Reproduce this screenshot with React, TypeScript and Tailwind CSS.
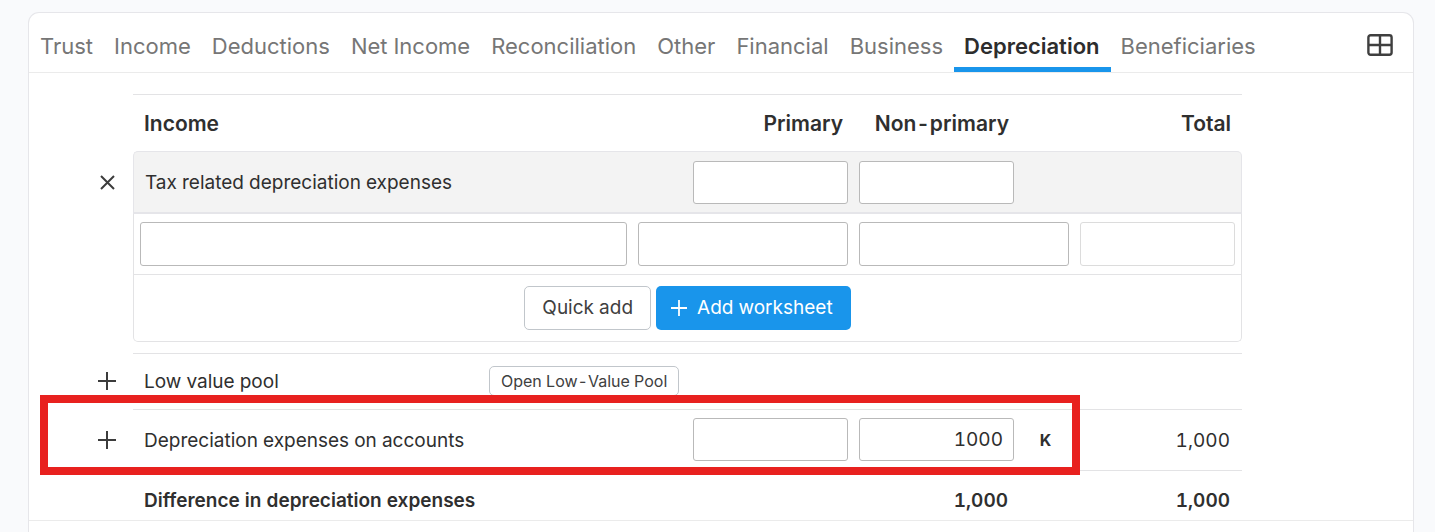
import { clsx } from "clsx";
import { useState } from "react";

const TABS = [
  "Trust",
  "Income",
  "Deductions",
  "Net Income",
  "Reconciliation",
  "Other",
  "Financial",
  "Business",
  "Depreciation",
  "Beneficiaries",
];

const GridIcon = () => (
  <svg
    width="26"
    height="22"
    viewBox="0 0 26 22"
    fill="none"
    stroke="currentColor"
    strokeWidth="2.4"
    aria-hidden
  >
    <rect x="1.4" y="1.2" width="23.2" height="19.6" rx="2.2" />
    <path d="M13 1.2v19.6M1.4 11h23.2" />
  </svg>
);

const PlusIcon = ({ size }: { size: number }) => (
  <svg
    width={size}
    height={size}
    viewBox="0 0 18 18"
    fill="none"
    stroke="currentColor"
    strokeWidth="2"
    aria-hidden
  >
    <path d="M9 0v18M0 9h18" />
  </svg>
);

const CloseIcon = () => (
  <svg
    width="16"
    height="16"
    viewBox="0 0 16 16"
    fill="none"
    stroke="currentColor"
    strokeWidth="2"
    aria-hidden
  >
    <path d="M2 1l13 13M15 1L2 14" />
  </svg>
);

const Field = ({
  label,
  value = "",
  className,
  disabled,
}: {
  label: string;
  value?: string;
  className?: string;
  disabled?: boolean;
}) => {
  const [current, setCurrent] = useState(value);

  return (
    <input
      type="text"
      aria-label={label}
      value={current}
      disabled={disabled}
      onChange={(event) => setCurrent(event.target.value)}
      className={clsx(
        "block rounded-[3px] border bg-white px-2.5 text-right outline-none",
        disabled ? "border-[#dcdcdc]" : "border-[#b9b9b9]",
        className,
      )}
    />
  );
};

const ExpandCell = ({
  label,
  children,
}: {
  label: string;
  children: React.ReactNode;
}) => (
  <td className="pr-4 align-middle">
    <button
      type="button"
      aria-label={label}
      className="ml-auto flex w-5 justify-center text-[#3c3c3c]"
    >
      {children}
    </button>
  </td>
);

const Tabs = () => (
  <header className="flex items-center justify-between border-b border-[#ebebeb] pr-5 pl-px">
    <nav className="flex">
      {TABS.map((tab) => (
        <a
          key={tab}
          href={`#${tab}`}
          className={clsx(
            "border-b-5 pt-[17px] pr-[11px] pb-[5px] pl-2.5 text-[22px] leading-8 whitespace-nowrap",
            tab === "Depreciation"
              ? "border-[#1995eb] font-semibold text-[#2d2d2d]"
              : "border-transparent text-[#767676]",
          )}
        >
          {tab}
        </a>
      ))}
    </nav>
    <button type="button" aria-label="Layout" className="pt-1 text-[#3f3f3f]">
      <GridIcon />
    </button>
  </header>
);

const DepreciationTable = () => (
  <table className="w-full table-fixed border-separate border-spacing-0 text-left text-[19px] leading-7">
    <colgroup>
      <col className="w-[60px]" />
      <col />
      <col className="w-[149px]" />
      <col className="w-[221px]" />
      <col className="w-[166px]" />
      <col className="w-[55px]" />
      <col className="w-[168px]" />
    </colgroup>
    <thead>
      <tr className="h-[57px] text-[21px] [&>th]:border-t [&>th]:border-[#e3e3e5] [&>th]:pt-0.5 [&>th]:font-semibold">
        <td />
        <th colSpan={2} className="pl-[11px]">
          Income
        </th>
        <th className="pr-2.5 text-right">Primary</th>
        <th className="pr-2.5 text-right">Non-primary</th>
        <th />
        <th className="pr-[11px] text-right">Total</th>
      </tr>
    </thead>
    <tbody>
      <tr className="h-[63px] [&>td+td]:border-t [&>td+td]:border-b-2 [&>td+td]:border-[#e5e5e9] [&>td+td]:bg-[#f3f3f3]">
        <ExpandCell label="Collapse tax related depreciation expenses">
          <CloseIcon />
        </ExpandCell>
        <td colSpan={2} className="rounded-tl-[5px] border-l pt-0.5 pl-[11px]">
          Tax related depreciation expenses
        </td>
        <td className="pr-[5px]">
          <Field
            label="Tax related primary"
            className="ml-auto h-[43px] w-[155px]"
          />
        </td>
        <td className="pl-1.5">
          <Field
            label="Tax related non-primary"
            className="h-[43px] w-[155px]"
          />
        </td>
        <td />
        <td className="rounded-tr-[5px] border-r" />
      </tr>
      <tr className="h-[61px] [&>td+td]:border-b [&>td+td]:border-[#e3e3e5]">
        <td />
        <td colSpan={2} className="border-l pr-[5px] pl-1.5">
          <Field label="Description" className="h-11 w-full" />
        </td>
        <td className="pr-[5px] pl-1.5">
          <Field label="Primary amount" className="h-11 w-full" />
        </td>
        <td colSpan={2} className="pr-[5px] pl-1.5">
          <Field label="Non-primary amount" className="h-11 w-full" />
        </td>
        <td className="border-r px-1.5">
          <Field label="Total amount" className="h-11 w-full" disabled />
        </td>
      </tr>
      <tr className="h-[67px]">
        <td />
        <td
          colSpan={6}
          className="rounded-b-[5px] border-x border-b border-[#e3e3e5]"
        >
          <div className="flex justify-center gap-[5px]">
            <button
              type="button"
              className="h-11 rounded-[5px] border border-[#c1c6cb] px-[17px] text-[#404040]"
            >
              Quick add
            </button>
            <button
              type="button"
              className="flex h-11 items-center gap-2.5 rounded-[5px] bg-[#1995eb] pr-[18px] pl-[15px] text-white"
            >
              <PlusIcon size={16} />
              Add worksheet
            </button>
          </div>
        </td>
      </tr>
      <tr className="h-[11px]">
        <td colSpan={7} />
      </tr>
      <tr className="h-14 [&>td+td]:border-t [&>td+td]:border-[#e3e3e5]">
        <ExpandCell label="Expand low value pool">
          <PlusIcon size={18} />
        </ExpandCell>
        <td className="pl-[11px]">Low value pool</td>
        <td colSpan={2} className="pb-px pl-1.5">
          <button
            type="button"
            className="block h-[30px] rounded-[5px] border border-[#c1c6cb] px-[11px] text-base leading-7 text-[#404040]"
          >
            Open Low-Value Pool
          </button>
        </td>
        <td colSpan={3} />
      </tr>
      <tr className="relative h-[61px] [&>td+td]:border-t [&>td+td]:border-[#e3e3e5]">
        <ExpandCell label="Expand depreciation expenses on accounts">
          <PlusIcon size={18} />
          <span className="pointer-events-none absolute -top-3.5 right-[162px] -bottom-[5px] -left-[33px] border-8 border-[#e8211f]" />
        </ExpandCell>
        <td colSpan={2} className="pt-0.5 pl-[11px]">
          Depreciation expenses on accounts
        </td>
        <td className="pr-[5px] pb-px">
          <Field
            label="Accounts primary"
            className="ml-auto h-[43px] w-[155px]"
          />
        </td>
        <td className="pb-px pl-1.5">
          <Field
            label="Accounts non-primary"
            value="1000"
            className="h-[43px] w-[155px]"
          />
        </td>
        <td className="pr-0.5 text-center text-base font-bold">K</td>
        <td className="pt-0.5 pr-3 text-right">1,000</td>
      </tr>
      <tr className="leading-6 font-semibold [&>td]:pt-[18px] [&>td]:pb-[7px] [&>td+td]:border-t [&>td+td]:border-[#e3e3e5]">
        <td />
        <td colSpan={2} className="pl-[11px]">
          Difference in depreciation expenses
        </td>
        <td />
        <td className="pr-[11px] text-right">1,000</td>
        <td />
        <td className="pr-3 text-right">1,000</td>
      </tr>
    </tbody>
  </table>
);

export default function App() {
  return (
    <div className="flex min-h-screen flex-col bg-[#f9fafc] pt-3 pr-[21px] pl-7 font-['Inter',sans-serif] text-[#2f2f2f] tabular-nums">
      <main className="flex-1 rounded-t-[11px] border border-b-0 border-[#e6e6ea] bg-white">
        <Tabs />
        <section className="border-b border-[#ebebeb] pt-[21px] pr-[171px] pl-11">
          <DepreciationTable />
        </section>
      </main>
    </div>
  );
}
